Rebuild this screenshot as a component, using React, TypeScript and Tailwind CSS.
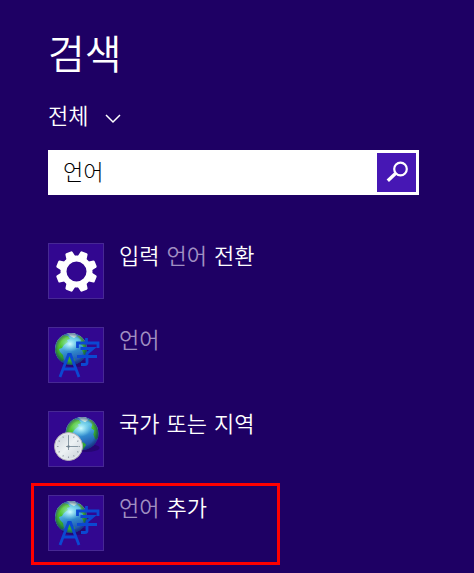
import React, { useId, useState } from "react";

function GearIcon() {
  const teeth = [22.5, 67.5, 112.5, 157.5, 202.5, 247.5, 292.5, 337.5];
  return (
    <svg viewBox="0 0 54 54" className="size-full" aria-hidden="true">
      <circle cx="27.5" cy="27.5" r="13" fill="none" stroke="#fff" strokeWidth="6" />
      {teeth.map((angle) => (
        <path
          key={angle}
          d="M22.5 14.5 L23.7 7.7 Q24 6.8 25 6.8 H30 Q31 6.8 31.3 7.7 L32.5 14.5 Z"
          fill="#fff"
          transform={`rotate(${angle} 27.5 27.5)`}
        />
      ))}
    </svg>
  );
}

function Globe({ cx, cy, r }: { cx: number; cy: number; r: number }) {
  const id = useId();
  return (
    <g transform={`translate(${cx} ${cy}) scale(${r / 16})`}>
      <defs>
        <linearGradient id={`${id}sea`} x1="0.35" y1="0" x2="0.65" y2="1">
          <stop offset="0" stopColor="#5fb4d8" />
          <stop offset="0.3" stopColor="#62c6e6" />
          <stop offset="0.6" stopColor="#2f86cc" />
          <stop offset="1" stopColor="#1b3f9c" />
        </linearGradient>
        <radialGradient id={`${id}shine`}>
          <stop offset="0" stopColor="#d6ffff" stopOpacity="0.95" />
          <stop offset="1" stopColor="#8fe8f8" stopOpacity="0" />
        </radialGradient>
        <radialGradient id={`${id}shade`}>
          <stop offset="0.75" stopColor="#10286c" stopOpacity="0" />
          <stop offset="1" stopColor="#10286c" stopOpacity="0.6" />
        </radialGradient>
        <linearGradient id={`${id}land`} x1="0" y1="0" x2="0.4" y2="1">
          <stop offset="0" stopColor="#8fe05f" />
          <stop offset="0.5" stopColor="#4cc426" />
          <stop offset="1" stopColor="#249032" />
        </linearGradient>
        <clipPath id={`${id}clip`}>
          <circle r="16" />
        </clipPath>
      </defs>
      <ellipse cx="4" cy="14" rx="13" ry="4" fill="#180650" opacity="0.45" />
      <circle r="16" fill={`url(#${id}sea)`} />
      <g clipPath={`url(#${id}clip)`}>
        <path
          d="M-16 2 L-14 -8 L-8 -14 L-3 -13 L-1 -10 L-4 -9 L-3 -7 L-7 -4 L-9 -1 L-12 0 L-11 3 L-8 6 L-7 11 L-10 13 L-14 8 Z"
          fill={`url(#${id}land)`}
        />
        <path
          d="M6 -13 L10 -13 L15 -6 L16 4 L13 6 L11 1 L12 -3 L9 -5 L10 -9 Z"
          fill={`url(#${id}land)`}
        />
        <path d="M-2 8 L2 9 L4 11 L1 16 L-4 15 Z" fill="#33a935" />
        <path d="M-4 -16 L4 -16 L6 -13 L3 -11 L-1 -13 Z" fill="#e0eedc" opacity="0.85" />
        <ellipse cx="-1" cy="-5" rx="10" ry="8" fill={`url(#${id}shine)`} />
        <circle r="16" fill={`url(#${id}shade)`} />
      </g>
    </g>
  );
}

function LanguageIcon() {
  return (
    <svg viewBox="0 0 54 54" className="size-full" aria-hidden="true">
      <Globe cx={22} cy={21} r={16} />
      <g fill="none" stroke="#0b48d2" strokeWidth="2.8">
        <path d="M11 49 L19.6 26.5 H21.4 L30 49 M14 41 H27" />
        <path d="M37.5 10 V15 M28.5 20 V15 H49 V20 M31.5 20.5 H44 L38 25.5 V34.5 Q38 36.5 36 36.5 H32 M28 28.5 H48" />
      </g>
    </svg>
  );
}

function RegionIcon() {
  const id = useId();
  const ticks = [0, 30, 60, 90, 120, 150, 180, 210, 240, 270, 300, 330];
  return (
    <svg viewBox="0 0 54 54" className="size-full" aria-hidden="true">
      <defs>
        <linearGradient id={`${id}face`} x1="0" y1="0" x2="1" y2="1">
          <stop offset="0" stopColor="#c3cdd6" />
          <stop offset="0.5" stopColor="#edf2f4" />
          <stop offset="1" stopColor="#c3ccd4" />
        </linearGradient>
      </defs>
      <Globe cx={33} cy={21.5} r={16.5} />
      <circle cx="19.5" cy="34.5" r="14" fill={`url(#${id}face)`} stroke="#b3adb7" />
      <circle cx="19.5" cy="34.5" r="12.8" fill="none" stroke="#e6ebee" />
      {ticks.map((angle) => (
        <path
          key={angle}
          d="M19.5 23 V24.5"
          stroke="#96a1ab"
          transform={`rotate(${angle} 19.5 34.5)`}
        />
      ))}
      <path d="M19.5 24 V38 M17 34.5 H29" fill="none" stroke="#8798a4" />
      <circle cx="19.5" cy="34.5" r="1.2" fill="#6e7f8d" />
    </svg>
  );
}

function Match({ children }: { children: React.ReactNode }) {
  return <span className="text-[#a08fc2]">{children}</span>;
}

const results = [
  { id: "switch", icon: <GearIcon />, label: <>입력 <Match>언어</Match> 전환</> },
  { id: "language", icon: <LanguageIcon />, label: <Match>언어</Match> },
  { id: "region", icon: <RegionIcon />, label: <>국가 또는 지역</> },
  { id: "add", icon: <LanguageIcon />, label: <><Match>언어</Match> 추가</>, marked: true },
];

export default function App() {
  const [query, setQuery] = useState("언어");

  return (
    <main className="min-h-screen bg-[#1e0064] pt-[25px] pr-[55px] pb-[22px] pl-12 font-['DejaVu_Sans','Noto_Sans_CJK_KR',sans-serif] font-[350] text-white">
      <h1 className="text-[40px] leading-[60px]">검색</h1>

      <div className="mt-4 grid w-fit items-center">
        <select
          aria-label="검색"
          className="col-start-1 row-start-1 h-8 appearance-none bg-transparent pr-9 text-[22px] leading-8 outline-none"
        >
          <option>전체</option>
        </select>
        <svg
          viewBox="0 0 16 10"
          className="pointer-events-none col-start-1 row-start-1 mt-1 mr-1 h-[10px] w-4 justify-self-end"
          fill="none"
          stroke="#fff"
          strokeWidth="1.5"
          aria-hidden="true"
        >
          <path d="M1 1 L8 8 L15 1" />
        </svg>
      </div>

      <form
        role="search"
        onSubmit={(event) => event.preventDefault()}
        className="mt-[17px] flex h-[45px] items-stretch bg-white p-[3px]"
      >
        <input
          type="text"
          aria-label="검색"
          value={query}
          onChange={(event) => setQuery(event.target.value)}
          className="min-w-0 flex-1 bg-white px-3 text-[22px] font-light text-black outline-none"
        />
        <button type="submit" aria-label="검색" className="w-[39px] bg-[#4617b4]">
          <svg viewBox="0 0 39 39" className="size-full" fill="none" stroke="#fff" aria-hidden="true">
            <circle cx="23.5" cy="16" r="6.3" strokeWidth="2.2" />
            <path d="M18.5 20.5 L10.8 27.8" strokeWidth="3.4" />
          </svg>
        </button>
      </form>

      <ul className="mt-12 flex flex-col gap-7">
        {results.map((result) => (
          <li key={result.id} className="relative">
            <a href="#" className="flex items-start gap-[15px]">
              <span className="size-14 shrink-0 border border-[#472894] bg-[#320790]">
                {result.icon}
              </span>
              <span className="text-[22px] leading-7">{result.label}</span>
            </a>
            {result.marked && (
              <span className="pointer-events-none absolute -top-3 -left-[17px] h-[82px] w-[249px] border-3 border-[#ff0000]" />
            )}
          </li>
        ))}
      </ul>
    </main>
  );
}
